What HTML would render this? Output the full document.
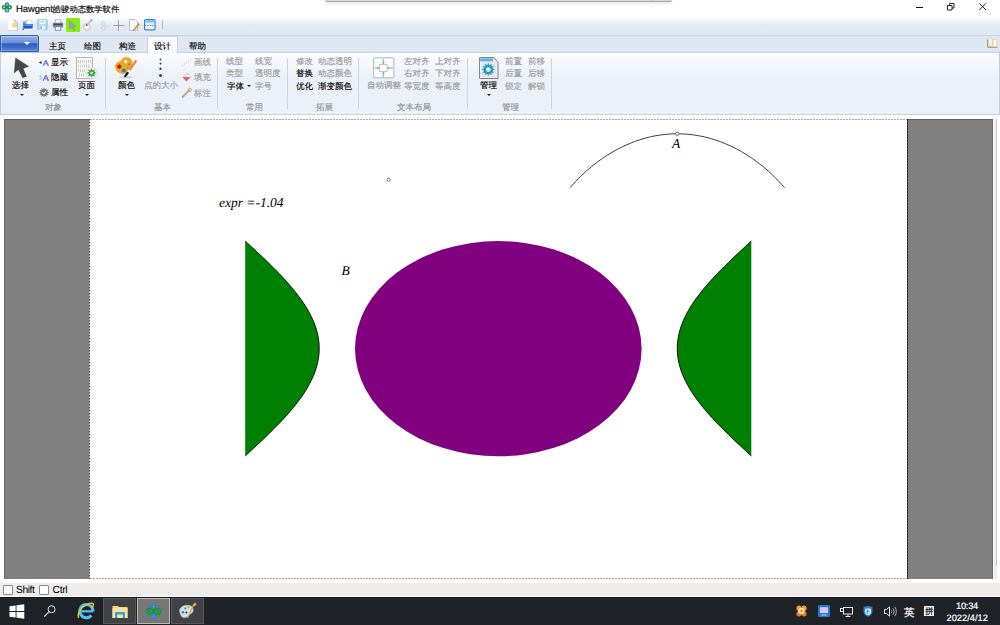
<!DOCTYPE html>
<html><head><meta charset="utf-8">
<style>
*{margin:0;padding:0;box-sizing:border-box}
html,body{text-rendering:geometricPrecision;width:1000px;height:625px;overflow:hidden;background:#fff;font-family:"Liberation Sans",sans-serif;font-size:9px;color:#000;position:relative}
.a{position:absolute;white-space:nowrap}
svg{position:absolute;overflow:visible}
#qat{left:0;top:17px;width:1000px;height:18px;background:linear-gradient(#ffffff 0px,#fdfeff 1px,#eef2f9 5px,#e3eaf4 9px,#e0e8f3 18px)}
#tabs{left:0;top:35px;width:1000px;height:18px;background:#dfe7f2;border-top:1px solid #c6d3e3;border-bottom:1px solid #c3d0e0}
#ribbon{left:0;top:53px;width:1000px;height:62px;background:linear-gradient(#fdfeff 0,#f6f9fd 7px,#ecf1f9 24px,#ebf0f8 100%);border-left:1px solid #c0cfe1;border-right:1px solid #c0cfe1;border-bottom:1px solid #c5d2e3}
#gray{left:4px;top:119px;width:989px;height:460px;background:#808080;border-top:1px solid #606060;border-left:1px solid #6a6a6a;border-right:1px solid #6a6a6a}
#page{left:90px;top:120px;width:817px;height:458px;background:#fff}
#track{left:994px;top:119px;width:3px;height:460px;background:#f0f0f0}
#thumb{left:996px;top:119px;width:1px;height:447px;background:#c8c8c8}
#status{left:0;top:583px;width:1000px;height:13px;background:#efebea;border-bottom:1px solid #fbfbfb;box-sizing:content-box}
#taskbar{left:0;top:597px;width:1000px;height:28px;background:#1f2327;border-top:1px solid #15181b}
.c{font-size:8.5px;line-height:9px;-webkit-text-stroke:0.15px currentColor}
.g{color:#9a9a9a}
.lb{color:#8f8f8f}
.sep{position:absolute;width:1px;top:58px;height:51px;background:#c9d5e4}
.dd{position:absolute;width:0;height:0;border-left:2px solid transparent;border-right:2px solid transparent;border-top:2px solid #222}
.tab{position:absolute;top:42px;font-size:8.5px;line-height:9px;-webkit-text-stroke:0.15px currentColor}
.tile{position:absolute;top:598px;height:26px;background:#404246;border:1px solid #56585c}
</style></head><body>

<!-- title bar -->
<svg style="left:0;top:0" width="16" height="16" viewBox="0 0 16 16">
 <rect x="4.8" y="2.6" width="4.3" height="4" rx="1.5" fill="#2a80d0"/>
 <rect x="4.8" y="8.4" width="4.3" height="4.2" rx="1.5" fill="#2a80d0"/>
 <rect x="5.8" y="3.8" width="2.2" height="8" fill="#7ab8ec"/>
 <ellipse cx="4.4" cy="7.2" rx="2.6" ry="2.3" fill="#14973a"/>
 <ellipse cx="9.4" cy="7.2" rx="2.6" ry="2.3" fill="#14973a"/>
 <circle cx="4.2" cy="7.2" r="0.9" fill="#bfe8c8"/>
 <circle cx="9.6" cy="7.2" r="0.9" fill="#bfe8c8"/>
</svg>
<div class="a" style="left:16px;top:4px;font-size:9.5px;line-height:10px;color:#111;letter-spacing:-0.1px;-webkit-text-stroke:0.2px #111">Hawgent<span style="font-size:8.3px;letter-spacing:0">皓骏动态数学软件</span></div>
<div class="a" style="left:325px;top:0;width:347px;height:2px;background:#d8d8d8;border-bottom:1px solid #a8a8a8;border-radius:0 0 3px 3px;box-shadow:0 2px 3px rgba(0,0,0,0.12)"></div>
<div class="a" style="left:652px;top:0;width:1px;height:2px;background:#b0b0b0"></div>
<div class="a" style="left:916px;top:7px;width:7px;height:1px;background:#111"></div>
<svg style="left:947px;top:3px" width="8" height="8" viewBox="0 0 8 8"><path d="M0.5 2.5h4.5v4.5h-4.5z M2.5 2.5V0.5h4.5v4.5h-2" fill="none" stroke="#111" stroke-width="0.9"/></svg>
<svg style="left:979px;top:3px" width="8" height="8" viewBox="0 0 8 8"><path d="M0.3 0.3L7 7M7 0.3L0.3 7" stroke="#111" stroke-width="0.9"/></svg>

<!-- quick access toolbar -->
<div class="a" id="qat"></div>
<div class="a" id="tabs"></div>
<div class="a" id="ribbon"></div>

<!-- file button -->
<div class="a" style="left:0;top:35px;width:39px;height:17px;background:linear-gradient(#8fb0e2 0,#6a93d6 45%,#2e60bd 52%,#3c6dc5 75%,#5c87d0 100%);border:1px solid #2a5cb4;border-radius:0 2px 0 0;box-shadow:inset 1px 1px 0 rgba(255,255,255,0.35),inset -1px -1px 0 rgba(255,255,255,0.2)"></div>
<div class="dd" style="left:24px;top:42px;border-left-width:3px;border-right-width:3px;border-top:3px solid #fff"></div>

<!-- tabs -->
<div class="tab" style="left:49px">主页</div>
<div class="tab" style="left:84px">绘图</div>
<div class="tab" style="left:119px">构造</div>
<div class="a" style="left:147px;top:36px;width:31px;height:18px;background:#f9fbfe;border:1px solid #c6d3e3;border-bottom:none;border-radius:2px 2px 0 0"></div>
<div class="tab" style="left:154px">设计</div>
<div class="tab" style="left:189px">帮助</div>

<!-- ribbon groups -->
<div class="sep" style="left:105px"></div>
<div class="sep" style="left:217px"></div>
<div class="sep" style="left:287px"></div>
<div class="sep" style="left:358px"></div>
<div class="sep" style="left:467px"></div>
<div class="sep" style="left:551px"></div>

<!-- group 对象 -->
<div class="a c" style="left:12px;top:81px">选择</div>
<div class="dd" style="left:20px;top:94px"></div>
<div class="a c" style="left:51px;top:58px">显示</div>
<div class="a c" style="left:51px;top:73px">隐藏</div>
<div class="a c" style="left:51px;top:88px">属性</div>
<div class="a c" style="left:78px;top:81px">页面</div>
<div class="dd" style="left:85px;top:94px"></div>
<div class="a c lb" style="left:45px;top:103px">对象</div>

<!-- group 基本 -->
<div class="a c" style="left:118px;top:81px">颜色</div>
<div class="dd" style="left:125px;top:94px"></div>
<div class="a c g" style="left:144px;top:81px">点的大小</div>
<div class="a c g" style="left:194px;top:58px">画线</div>
<div class="a c g" style="left:194px;top:73px">填充</div>
<div class="a c g" style="left:194px;top:88.5px">标注</div>
<div class="a c lb" style="left:154px;top:103px">基本</div>

<!-- group 常用 -->
<div class="a c g" style="left:226px;top:57px">线型</div>
<div class="a c g" style="left:255px;top:57px">线宽</div>
<div class="a c g" style="left:226px;top:69px">类型</div>
<div class="a c g" style="left:255px;top:69px">透明度</div>
<div class="a c" style="left:227px;top:81.5px">字体</div>
<div class="dd" style="left:247px;top:85px"></div>
<div class="a c g" style="left:255px;top:81.5px">字号</div>
<div class="a c lb" style="left:246px;top:103px">常用</div>

<!-- group 拓展 -->
<div class="a c g" style="left:296px;top:57px">修改</div>
<div class="a c g" style="left:318px;top:57px">动态透明</div>
<div class="a c" style="left:296px;top:69px">替换</div>
<div class="a c g" style="left:318px;top:69px">动态颜色</div>
<div class="a c" style="left:296px;top:81.5px">优化</div>
<div class="a c" style="left:318px;top:81.5px">渐变颜色</div>
<div class="a c lb" style="left:316px;top:103px">拓展</div>

<!-- group 文本布局 -->
<div class="a c g" style="left:367px;top:81px">自动调整</div>
<div class="a c g" style="left:404px;top:57px">左对齐</div>
<div class="a c g" style="left:435px;top:57px">上对齐</div>
<div class="a c g" style="left:404px;top:69px">右对齐</div>
<div class="a c g" style="left:435px;top:69px">下对齐</div>
<div class="a c g" style="left:404px;top:81.5px">等宽度</div>
<div class="a c g" style="left:435px;top:81.5px">等高度</div>
<div class="a c lb" style="left:397px;top:103px">文本布局</div>

<!-- group 管理 -->
<div class="a c" style="left:480px;top:81px">管理</div>
<div class="dd" style="left:487px;top:94px"></div>
<div class="a c g" style="left:505px;top:57px">前置</div>
<div class="a c g" style="left:528px;top:57px">前移</div>
<div class="a c g" style="left:505px;top:69px">后置</div>
<div class="a c g" style="left:528px;top:69px">后移</div>
<div class="a c g" style="left:505px;top:81.5px">锁定</div>
<div class="a c g" style="left:528px;top:81.5px">解锁</div>
<div class="a c lb" style="left:502px;top:103px">管理</div>

<!-- work area -->
<div class="a" id="gray"></div>
<div class="a" id="page"></div>
<div class="a" style="left:90px;top:119px;width:817px;height:1px;background:repeating-linear-gradient(90deg,#a8a8a8 0 2px,#fff 2px 3px)"></div>
<div class="a" style="left:90px;top:578px;width:817px;height:1px;background:repeating-linear-gradient(90deg,#a8a8a8 0 2px,#fff 2px 3px)"></div>
<div class="a" style="left:89px;top:119px;width:1px;height:460px;background:repeating-linear-gradient(180deg,#474747 0 1px,#8a8a8a 1px 2px,#c4c4c4 2px 3px)"></div>
<div class="a" style="left:907px;top:119px;width:1px;height:460px;background:repeating-linear-gradient(180deg,#1a1a1a 0 2px,#555 2px 3px)"></div>
<div class="a" id="track"></div>
<div class="a" id="thumb"></div>
<!-- canvas -->
<svg style="left:0;top:0" width="1000" height="625" viewBox="0 0 1000 625">
<path d="M245.2 241.0 L251.0 246.4 L256.8 251.8 L262.5 257.1 L268.1 262.5 L273.5 267.9 L278.8 273.2 L283.9 278.6 L288.7 284.0 L293.3 289.4 L297.5 294.8 L301.5 300.1 L305.1 305.5 L308.3 310.9 L311.1 316.2 L313.6 321.6 L315.6 327.0 L317.2 332.4 L318.3 337.8 L319.0 343.1 L319.2 348.5 L319.0 353.9 L318.3 359.2 L317.2 364.6 L315.6 370.0 L313.6 375.4 L311.1 380.8 L308.3 386.1 L305.1 391.5 L301.5 396.9 L297.5 402.2 L293.3 407.6 L288.7 413.0 L283.9 418.4 L278.8 423.8 L273.5 429.1 L268.1 434.5 L262.5 439.9 L256.8 445.2 L251.0 450.6 L245.2 456.0Z" fill="#008000"/>
<path d="M245.2 241.0 L251.0 246.4 L256.8 251.8 L262.5 257.1 L268.1 262.5 L273.5 267.9 L278.8 273.2 L283.9 278.6 L288.7 284.0 L293.3 289.4 L297.5 294.8 L301.5 300.1 L305.1 305.5 L308.3 310.9 L311.1 316.2 L313.6 321.6 L315.6 327.0 L317.2 332.4 L318.3 337.8 L319.0 343.1 L319.2 348.5 L319.0 353.9 L318.3 359.2 L317.2 364.6 L315.6 370.0 L313.6 375.4 L311.1 380.8 L308.3 386.1 L305.1 391.5 L301.5 396.9 L297.5 402.2 L293.3 407.6 L288.7 413.0 L283.9 418.4 L278.8 423.8 L273.5 429.1 L268.1 434.5 L262.5 439.9 L256.8 445.2 L251.0 450.6 L245.2 456.0" fill="none" stroke="#0a1a0a" stroke-width="1"/>
<path d="M751.3 241.0 L745.5 246.4 L739.7 251.8 L734.0 257.1 L728.4 262.5 L723.0 267.9 L717.7 273.2 L712.6 278.6 L707.8 284.0 L703.2 289.4 L699.0 294.8 L695.0 300.1 L691.4 305.5 L688.2 310.9 L685.4 316.2 L682.9 321.6 L680.9 327.0 L679.3 332.4 L678.2 337.8 L677.5 343.1 L677.3 348.5 L677.5 353.9 L678.2 359.2 L679.3 364.6 L680.9 370.0 L682.9 375.4 L685.4 380.8 L688.2 386.1 L691.4 391.5 L695.0 396.9 L699.0 402.2 L703.2 407.6 L707.8 413.0 L712.6 418.4 L717.7 423.8 L723.0 429.1 L728.4 434.5 L734.0 439.9 L739.7 445.2 L745.5 450.6 L751.3 456.0Z" fill="#008000"/>
<path d="M751.3 241.0 L745.5 246.4 L739.7 251.8 L734.0 257.1 L728.4 262.5 L723.0 267.9 L717.7 273.2 L712.6 278.6 L707.8 284.0 L703.2 289.4 L699.0 294.8 L695.0 300.1 L691.4 305.5 L688.2 310.9 L685.4 316.2 L682.9 321.6 L680.9 327.0 L679.3 332.4 L678.2 337.8 L677.5 343.1 L677.3 348.5 L677.5 353.9 L678.2 359.2 L679.3 364.6 L680.9 370.0 L682.9 375.4 L685.4 380.8 L688.2 386.1 L691.4 391.5 L695.0 396.9 L699.0 402.2 L703.2 407.6 L707.8 413.0 L712.6 418.4 L717.7 423.8 L723.0 429.1 L728.4 434.5 L734.0 439.9 L739.7 445.2 L745.5 450.6 L751.3 456.0" fill="none" stroke="#0a1a0a" stroke-width="1"/>
<ellipse cx="498.3" cy="348.7" rx="143.3" ry="107.6" fill="#800080"/>
<path d="M570.1 187.6 L575.5 181.6 L580.8 176.2 L586.2 171.2 L591.5 166.6 L596.9 162.4 L602.3 158.5 L607.6 155.0 L613.0 151.7 L618.3 148.8 L623.7 146.1 L629.1 143.8 L634.4 141.6 L639.8 139.8 L645.1 138.2 L650.5 136.8 L655.9 135.7 L661.2 134.9 L666.6 134.3 L671.9 133.9 L677.3 133.8 L682.7 133.9 L688.0 134.3 L693.4 134.9 L698.7 135.7 L704.1 136.8 L709.5 138.2 L714.8 139.8 L720.2 141.6 L725.5 143.8 L730.9 146.1 L736.3 148.8 L741.6 151.7 L747.0 155.0 L752.3 158.5 L757.7 162.4 L763.1 166.6 L768.4 171.2 L773.8 176.2 L779.1 181.6 L784.5 187.6" fill="none" stroke="#404040" stroke-width="1"/>
<circle cx="677.3" cy="133.8" r="1.7" fill="#fff" stroke="#555" stroke-width="0.8"/>
<circle cx="388.5" cy="179.7" r="1.6" fill="#fff" stroke="#666" stroke-width="0.9"/>
</svg>
<div class="a" style="left:219px;top:196px;font-family:'Liberation Serif',serif;font-style:italic;font-size:13.5px;line-height:14px">expr =-1.04</div>
<div class="a" style="left:341.5px;top:263.8px;font-family:'Liberation Serif',serif;font-style:italic;font-size:13.5px;line-height:14px">B</div>
<div class="a" style="left:672px;top:137px;font-family:'Liberation Serif',serif;font-style:italic;font-size:13.5px;line-height:14px">A</div>

<!-- status bar -->
<div class="a" id="status"></div>
<div class="a" style="left:3px;top:585px;width:10px;height:10px;border:1px solid #8a8a8a;border-radius:1px;background:#fff"></div>
<div class="a" style="left:16px;top:585.5px;font-size:10.3px;line-height:10px;letter-spacing:-0.45px">Shift</div>
<div class="a" style="left:39px;top:585px;width:10px;height:10px;border:1px solid #8a8a8a;border-radius:1px;background:#fff"></div>
<div class="a" style="left:52.5px;top:585.5px;font-size:10.3px;line-height:10px;letter-spacing:-0.3px">Ctrl</div>

<!-- taskbar -->
<div class="a" id="taskbar"></div>
<div class="tile" style="left:103px;width:33px"></div>
<div class="tile" style="left:137px;width:33px;background:#777;border-color:#b8b8b8"></div>
<div class="tile" style="left:171px;width:33px"></div>
<div class="a" style="left:956px;top:600.5px;font-size:9.3px;line-height:10px;color:#fff;letter-spacing:-0.25px;-webkit-text-stroke:0.2px #fff">10:34</div>
<div class="a" style="left:946.5px;top:613px;font-size:9.3px;line-height:10px;color:#fff;-webkit-text-stroke:0.2px #fff">2022/4/12</div>
<div class="a" style="left:904px;top:607.5px;font-size:10.5px;line-height:10px;color:#fff;-webkit-text-stroke:0.2px #fff">英</div>


<!-- QAT icons -->
<svg style="left:8px;top:19px" width="10" height="12" viewBox="0 0 10 12">
 <path d="M0.3 0.3H6.2L9.4 3.5V11.6H0.3Z" fill="#fdfdff"/>
 <path d="M6 0.3L9.4 3.7V11.6" fill="none" stroke="#9aa6c8" stroke-width="0.7"/>
 <path d="M5.5 0.5L9 4" stroke="#c8c8f0" stroke-width="1.5"/>
 <path d="M0.3 11.6H9.4" stroke="#c8c8c8" stroke-width="0.8"/>
 <circle cx="6.6" cy="6.3" r="2" fill="#f8d040"/>
 <path d="M6.6 3.2V9.4M3.5 6.3H9.7M4.4 4.1L8.8 8.5M8.8 4.1L4.4 8.5" stroke="#f0a040" stroke-width="0.6" opacity="0.8"/>
 <circle cx="6.6" cy="6.3" r="1.6" fill="#fbe060"/>
</svg>
<svg style="left:22px;top:19px" width="12" height="12" viewBox="0 0 12 12">
 <path d="M1 2.5H3.5L4.3 1.5H6V8H1Z" fill="#5a9ae0"/>
 <path d="M3.5 3L7 0.8L10 2.5L9.5 5.5L5 6Z" fill="#fff" stroke="#a8b8d8" stroke-width="0.5"/>
 <path d="M0.6 10.8L2 5.2H11.3L10 10.8Z" fill="#1a5cd0"/>
 <path d="M2.2 6.2H10.8" stroke="#7fb0f0" stroke-width="0.9"/>
 <path d="M0.8 9.6H10.2V11H0.8Z" fill="#eef2f8"/>
 <circle cx="1.2" cy="10.2" r="0.8" fill="#1a5cd0"/>
</svg>
<svg style="left:37px;top:19px" width="11" height="11" viewBox="0 0 11 11">
 <rect x="0.5" y="0.5" width="9.8" height="10" rx="1" fill="#a9d6f5" stroke="#8cc8f0" stroke-width="0.8"/>
 <rect x="2.5" y="1" width="6" height="4.2" fill="#fff"/>
 <path d="M3.2 2.8H7.8" stroke="#8a8f95" stroke-width="0.6"/>
 <rect x="2.8" y="6.8" width="5.2" height="3.7" fill="#f4f8fc"/>
 <rect x="3.6" y="7.3" width="1" height="2.6" fill="#6a7a88"/>
</svg>
<svg style="left:52px;top:19px" width="12" height="12" viewBox="0 0 12 12">
 <rect x="3.2" y="0.8" width="5.6" height="3.5" fill="#fff" stroke="#6aa8dc" stroke-width="0.7"/>
 <rect x="0.8" y="3.8" width="10.4" height="4.8" rx="1" fill="#8a8a8a"/>
 <rect x="1.5" y="4.6" width="9" height="1.6" fill="#4a4a4a"/>
 <rect x="3.2" y="7.8" width="5.6" height="3.4" fill="#fff" stroke="#3a86c8" stroke-width="0.8"/>
</svg>
<div class="a" style="left:66px;top:18px;width:14px;height:14px;background:#84ee12;border-radius:1px"></div>
<svg style="left:69px;top:20px" width="8" height="11" viewBox="0 0 8 11">
 <path d="M0.5 0.5L7 6.5H4.2L5.8 10L4.6 10.5L3 7L0.5 9Z" fill="#a49bb6" stroke="#8d85a3" stroke-width="0.5"/>
</svg>
<svg style="left:83px;top:19px" width="10" height="12" viewBox="0 0 10 12">
 <circle cx="3.9" cy="8" r="3.2" fill="#fff" stroke="#f2a0a0" stroke-width="1"/>
 <path d="M9 0.8L3.6 6.2" stroke="#8cc4ea" stroke-width="1.5"/>
 <path d="M9.2 0.6L8.2 1.6" stroke="#d85050" stroke-width="1.3"/>
 <path d="M4.2 5.6L3.2 6.6" stroke="#333" stroke-width="1.3"/>
</svg>
<svg style="left:100px;top:21px" width="9" height="10" viewBox="0 0 9 10">
 <circle cx="3.5" cy="2.5" r="1.8" fill="none" stroke="#d0d0d0" stroke-width="1"/>
 <circle cx="3.5" cy="7.3" r="2" fill="none" stroke="#d0d0d0" stroke-width="1"/>
 <path d="M6 4L8.5 5L6 6" fill="none" stroke="#d8d8d8" stroke-width="1"/>
</svg>
<svg style="left:113px;top:20px" width="12" height="11" viewBox="0 0 12 11">
 <path d="M5.5 0V11M0.5 5.5H11.5" stroke="#8c8c8c" stroke-width="0.8"/>
</svg>
<svg style="left:129px;top:19px" width="11" height="12" viewBox="0 0 11 12">
 <path d="M0.5 0.5H6L8.5 3V11.5H0.5Z" fill="#fafafa" stroke="#b0b0b0" stroke-width="0.8"/>
 <path d="M10.3 5.5L5.5 11L4.3 11.6L4.6 10.3L9.3 4.7Z" fill="#f2b721" stroke="#8a6a20" stroke-width="0.5"/>
 <path d="M10.3 5.5L9.3 4.7" stroke="#e05050" stroke-width="1"/>
</svg>
<svg style="left:144px;top:19px" width="12" height="12" viewBox="0 0 12 12">
 <rect x="0.6" y="0.6" width="10.4" height="10.2" rx="1" fill="#fff" stroke="#2f86cc" stroke-width="1.2"/>
 <rect x="1.2" y="1.2" width="9.2" height="2.4" fill="#7cc0ee"/>
 <path d="M2 4.3H10M2 8.4H10" stroke="#d8d8d8" stroke-width="0.8"/>
 <path d="M0.8 6.4H10.8" stroke="#3a93dc" stroke-width="1" stroke-dasharray="1.6 0.9"/>
</svg>
<div class="a" style="left:162px;top:20px;width:1px;height:9px;background:#b8b8b8"></div>

<!-- book icon -->
<svg style="left:987px;top:37px" width="11" height="11" viewBox="0 0 11 11">
 <rect x="0.3" y="2.5" width="1" height="7.5" fill="#4a86c8"/>
 <path d="M1 10V2L3 0.5L5.5 2V10Z" fill="#f2d9a6"/>
 <path d="M2.5 1.5L4.5 2.5V8.5L2.5 7.5Z" fill="#fff"/>
 <path d="M5.5 2.3H10V10H5.5Z" fill="#efd49c"/>
 <path d="M6.8 3H9V9.5H6.8Z" fill="#fff"/>
 <path d="M0.5 10.3H10.3" stroke="#6b7f99" stroke-width="0.8"/>
</svg>

<!-- ribbon icons: select arrow -->
<svg style="left:12px;top:56px" width="19" height="24" viewBox="12 56 19 24">
 <path d="M15.2 57.1L29.6 66.4L23.8 68.8L27.2 76.8L22.4 78.4L18.3 70.3L13.5 73.9Z" fill="#474747" stroke="#fff" stroke-width="0.6" stroke-linejoin="round"/>
</svg>
<!-- show/hide A icons -->
<svg style="left:38px;top:58px" width="13" height="9" viewBox="0 0 13 9">
 <path d="M1 4.5H3.5M3 3V6" stroke="#333" stroke-width="0.9"/>
 <path d="M5.2 7.8L7.8 2.3L10.4 7.8" fill="none" stroke="#2b8de8" stroke-width="1.2" stroke-linejoin="bevel"/>
 <path d="M7.8 2.3L10.4 7.8" fill="none" stroke="#e25aa8" stroke-width="1.2"/>
 <path d="M6.4 5.8H9.2" stroke="#5a7de0" stroke-width="0.9"/>
</svg>
<svg style="left:38px;top:73px" width="13" height="9" viewBox="0 0 13 9">
 <path d="M1 3H3.5M1 6H3.5M3 2.5V6.5" stroke="#bbb" stroke-width="0.9"/>
 <path d="M5.2 7.8L7.8 2.3L10.4 7.8" fill="none" stroke="#2b8de8" stroke-width="1.2" stroke-linejoin="bevel"/>
 <path d="M7.8 2.3L10.4 7.8" fill="none" stroke="#e25aa8" stroke-width="1.2"/>
 <path d="M6.4 5.8H9.2" stroke="#5a7de0" stroke-width="0.9"/>
</svg>
<svg style="left:38px;top:87px" width="12" height="11" viewBox="0 0 12 11">
 <path d="M9.37 5.06 L10.79 5.12 L10.79 5.88 L9.37 5.94 L9.14 6.80 L10.33 7.57 L9.96 8.22 L8.70 7.57 L8.07 8.20 L8.72 9.46 L8.07 9.83 L7.30 8.64 L6.44 8.87 L6.38 10.29 L5.62 10.29 L5.56 8.87 L4.70 8.64 L3.93 9.83 L3.28 9.46 L3.93 8.20 L3.30 7.57 L2.04 8.22 L1.67 7.57 L2.86 6.80 L2.63 5.94 L1.21 5.88 L1.21 5.12 L2.63 5.06 L2.86 4.20 L1.67 3.43 L2.04 2.78 L3.30 3.43 L3.93 2.80 L3.28 1.54 L3.93 1.17 L4.70 2.36 L5.56 2.13 L5.62 0.71 L6.38 0.71 L6.44 2.13 L7.30 2.36 L8.07 1.17 L8.72 1.54 L8.07 2.80 L8.70 3.43 L9.96 2.78 L10.33 3.43 L9.14 4.20Z" fill="#707070"/>
 <circle cx="6" cy="5.5" r="3.5" fill="#7a7a7a"/>
 <path d="M4.3 5.3L5.8 6.8L7.9 4.3" fill="none" stroke="#fff" stroke-width="1.1"/>
</svg>
<!-- page icon -->
<svg style="left:76px;top:57px" width="23" height="23" viewBox="76 57 23 23">
 <rect x="76.5" y="57.5" width="16" height="21" fill="#f8f8f8" stroke="#b4b4b4" stroke-width="1"/>
 <g stroke="#c6c6c6" stroke-width="0.9">
  <path d="M78.5 60V63M80.5 60V63M82.5 60V63M84.5 60V63M86.5 60V63M88.5 60V63M90.5 60V63"/>
  <path d="M78.5 64.5V67.5M80.5 64.5V67.5M82.5 64.5V67.5M84.5 64.5V67.5M86.5 64.5V67.5M88.5 64.5V67.5"/>
  <path d="M78.5 69V72M80.5 69V72M82.5 69V72M84.5 69V72"/>
  <path d="M79.5 73.5V76.5M81.5 73.5V76.5M83.5 73.5V76.5"/>
 </g>
 <circle cx="91.6" cy="73" r="5.8" fill="#f4f0f6" stroke="#ccc" stroke-width="0.6"/>
 <path d="M94.52 72.30 L95.86 72.43 L95.86 73.57 L94.52 73.70 L94.16 74.57 L95.02 75.61 L94.21 76.42 L93.17 75.56 L92.30 75.92 L92.17 77.26 L91.03 77.26 L90.90 75.92 L90.03 75.56 L88.99 76.42 L88.18 75.61 L89.04 74.57 L88.68 73.70 L87.34 73.57 L87.34 72.43 L88.68 72.30 L89.04 71.43 L88.18 70.39 L88.99 69.58 L90.03 70.44 L90.90 70.08 L91.03 68.74 L92.17 68.74 L92.30 70.08 L93.17 70.44 L94.21 69.58 L95.02 70.39 L94.16 71.43Z" fill="#3aa635"/>
 <circle cx="91.6" cy="73" r="1.3" fill="#eef6ea"/>
</svg>
<!-- palette icon -->
<svg style="left:113px;top:55px" width="26" height="25" viewBox="113 55 26 25">
 <ellipse cx="126" cy="77.3" rx="7.5" ry="1.3" fill="#000" opacity="0.12"/>
 <path d="M123 58.2C127 56.5 131.5 58 132 62C132.5 65 130.5 66.5 130 69C129.5 72 127 74 122.5 73.5C118 73 115.5 70 115.5 66.5C115.5 63 118 62 120.5 61.5C122 61 121.5 59 123 58.2Z" fill="#f5a71b" stroke="#e8900a" stroke-width="0.5"/>
 <circle cx="125.6" cy="61.6" r="1.7" fill="#fff"/>
 <circle cx="119.3" cy="66.7" r="2.1" fill="#b61d1d"/>
 <circle cx="123.8" cy="70.4" r="2" fill="#1b86d8"/>
 <circle cx="129.2" cy="64.2" r="1" fill="#8a5ac8"/>
 <circle cx="127.6" cy="67.6" r="1" fill="#62b83a"/>
 <path d="M135.8 61.2L129.2 70.5" stroke="#e6883a" stroke-width="2.3" stroke-linecap="round"/>
 <path d="M129.6 70L127.4 73.2" stroke="#f4f4f4" stroke-width="2.2"/>
 <path d="M127.6 73L125.2 76.2" stroke="#161616" stroke-width="2.2" stroke-linecap="round"/>
</svg>
<!-- dots -->
<svg style="left:155px;top:56px" width="12" height="22" viewBox="155 56 12 22">
 <circle cx="160.5" cy="59.5" r="0.9" fill="#4a4a4a"/>
 <circle cx="160.5" cy="63.6" r="1.05" fill="#4a4a4a"/>
 <circle cx="160.5" cy="68.7" r="1.25" fill="#4a4a4a"/>
 <circle cx="160.5" cy="75.5" r="1.55" fill="#4a4a4a"/>
</svg>
<!-- draw line / fill / label -->
<svg style="left:181px;top:57px" width="12" height="42" viewBox="181 57 12 42">
 <path d="M182 65.7L191 59.5" stroke="#9a9a9a" stroke-width="0.9" stroke-dasharray="0.9 1.6"/>
 <path d="M182.5 77H190.5L186.5 81.5Z" fill="#f05a6a"/>
 <path d="M183 76.5L188 73M188 73V75M190 76L191 77" stroke="#b0b0b0" stroke-width="0.6" fill="none"/>
 <path d="M182.5 97L189 90.5" stroke="#9a9a9a" stroke-width="1.8" stroke-linecap="round"/>
 <path d="M183 96.5L189 90.5" stroke="#e0e0e0" stroke-width="0.6"/>
 <circle cx="189.8" cy="89.8" r="1.6" fill="none" stroke="#f0a030" stroke-width="1"/>
</svg>
<!-- auto adjust icon -->
<svg style="left:373px;top:57px" width="22" height="22" viewBox="373 57 22 22">
 <rect x="373.6" y="57.8" width="20.2" height="20" rx="1" fill="#fbfcfe" stroke="#b5b5b5" stroke-width="1"/>
 <rect x="379.6" y="64.4" width="7.4" height="7.2" fill="#fff" stroke="#f5b48a" stroke-width="1"/>
 <g stroke="#5ab4ea" stroke-width="1">
  <path d="M383.3 59V64M383.3 72V77M374.5 68H379.5M387.2 68H393"/>
 </g>
 <g fill="#5ab4ea">
  <path d="M381.8 62.2H384.8L383.3 64Z M381.8 73.8H384.8L383.3 72Z M377.6 66.5V69.5L379.5 68Z M389 66.5V69.5L387.2 68Z"/>
 </g>
</svg>
<!-- manage icon -->
<svg style="left:479px;top:57px" width="20" height="23" viewBox="479 57 20 23">
 <path d="M479.6 57.6H493.5L498 62.2V78.5H479.6Z" fill="#fff" stroke="#7a7a7a" stroke-width="1"/>
 <rect x="480.2" y="58.3" width="13" height="3.2" fill="#5cb5e6"/>
 <rect x="481.2" y="62.2" width="15.5" height="15.5" fill="#e6e6e6"/>
 <path d="M492.86 68.90 L494.48 69.01 L494.48 69.99 L492.86 70.10 L492.55 71.26 L493.90 72.17 L493.41 73.01 L491.95 72.30 L491.10 73.15 L491.81 74.61 L490.97 75.10 L490.06 73.75 L488.90 74.06 L488.79 75.68 L487.81 75.68 L487.70 74.06 L486.54 73.75 L485.63 75.10 L484.79 74.61 L485.50 73.15 L484.65 72.30 L483.19 73.01 L482.70 72.17 L484.05 71.26 L483.74 70.10 L482.12 69.99 L482.12 69.01 L483.74 68.90 L484.05 67.74 L482.70 66.83 L483.19 65.99 L484.65 66.70 L485.50 65.85 L484.79 64.39 L485.63 63.90 L486.54 65.25 L487.70 64.94 L487.81 63.32 L488.79 63.32 L488.90 64.94 L490.06 65.25 L490.97 63.90 L491.81 64.39 L491.10 65.85 L491.95 66.70 L493.41 65.99 L493.90 66.83 L492.55 67.74Z" fill="#1b95dc"/>
 <circle cx="488.3" cy="69.5" r="4.7" fill="#1b95dc"/>
 <circle cx="488.3" cy="69.5" r="3.3" fill="none" stroke="#16a89a" stroke-width="1.2"/>
 <circle cx="488.3" cy="69.5" r="2.3" fill="#fff"/>
</svg>

<!-- taskbar icons -->
<svg style="left:9px;top:604px" width="16" height="15" viewBox="0 0 16 15">
 <path d="M0.5 2.2L6.6 1.4V7H0.5Z M7.5 1.3L15.3 0.2V7H7.5Z M0.5 7.9H6.6V13.6L0.5 12.8Z M7.5 7.9H15.3V14.8L7.5 13.7Z" fill="#fff"/>
</svg>
<svg style="left:43px;top:603px" width="15" height="15" viewBox="0 0 15 15">
 <circle cx="8.6" cy="6.2" r="3.5" fill="none" stroke="#e6e6e6" stroke-width="1"/>
 <path d="M6.2 8.7L1.3 13.5" stroke="#e6e6e6" stroke-width="1.1"/>
</svg>
<svg style="left:72px;top:599px" width="26" height="23" viewBox="72 599 26 23">
 <path d="M93 611.2A6.6 6.6 0 1 0 91.4 615.4" fill="none" stroke="#4cc4f4" stroke-width="3"/>
 <path d="M80.5 611.3H93.2" stroke="#4cc4f4" stroke-width="2.2"/>
 <path d="M78.8 617.8C76.8 614 80.5 607.5 86.5 604.6C90.3 602.8 93.6 602.6 93.4 604.9C93.3 606 92.6 607 91.8 607.6" fill="none" stroke="#f2c01a" stroke-width="1.5"/>
</svg>
<svg style="left:112px;top:605px" width="16" height="14" viewBox="0 0 16 14">
 <path d="M0.5 1H6L7 2H15.5V13H0.5Z" fill="#f8d775"/>
 <path d="M0.5 3H15.5V13H0.5Z" fill="#fde49a"/>
 <path d="M3 13V7H13V13H10.8V9.5H5.2V13Z" fill="#2ba4e9"/>
</svg>
<svg style="left:146px;top:603px" width="16" height="17" viewBox="0 0 16 17">
 <circle cx="7.5" cy="3.6" r="2.6" fill="#1c8ad8"/>
 <circle cx="7.5" cy="13" r="2.6" fill="#1c8ad8"/>
 <circle cx="7.5" cy="3.6" r="0.8" fill="#6ab8f0"/>
 <circle cx="7.5" cy="13" r="0.8" fill="#6ab8f0"/>
 <path d="M7.5 8.3C6 5.9 4.4 5.5 3 5.5C1.5 5.5 0.6 6.9 0.6 8.3C0.6 9.7 1.5 11.1 3 11.1C4.4 11.1 6 10.7 7.5 8.3C9 5.9 10.6 5.5 12 5.5C13.5 5.5 14.4 6.9 14.4 8.3C14.4 9.7 13.5 11.1 12 11.1C10.6 11.1 9 10.7 7.5 8.3Z" fill="none" stroke="#14993a" stroke-width="1.9"/>
 <circle cx="3.2" cy="8.3" r="0.7" fill="#0d6a28"/>
 <circle cx="11.8" cy="8.3" r="0.7" fill="#0d6a28"/>
</svg>
<svg style="left:178px;top:602px" width="19" height="18" viewBox="0 0 19 18">
 <path d="M1.8 10C0.8 6.5 4.2 3.6 8.5 3.3C12.5 3 15.3 5 15.2 8C15.1 11 12.8 11.6 11.3 12.8C9.8 14 8.8 16.2 5.5 15.6C3.5 15.2 2.4 12.8 1.8 10Z" fill="#c9e4f7" stroke="#9cc6e6" stroke-width="0.6"/>
 <circle cx="5" cy="10.2" r="1.2" fill="#e03a2a"/>
 <circle cx="7.3" cy="6.4" r="1.2" fill="#4cbb3a"/>
 <circle cx="10.6" cy="5.2" r="1.3" fill="#f2b81a"/>
 <circle cx="8.3" cy="10.4" r="1" fill="#2a3a48"/>
 <path d="M15.6 3L9.5 16" stroke="#f09a2a" stroke-width="1.4"/>
 <path d="M17.8 1.2L15.6 3.6" stroke="#e0a860" stroke-width="2.4"/>
</svg>

<!-- tray -->
<svg style="left:796px;top:605px" width="11" height="12" viewBox="0 0 11 12">
 <circle cx="3" cy="3.2" r="2.6" fill="#f89a2a"/>
 <circle cx="8" cy="3.2" r="2.6" fill="#f89a2a"/>
 <circle cx="3" cy="8.8" r="2.6" fill="#f07a1a"/>
 <circle cx="8" cy="8.8" r="2.6" fill="#f07a1a"/>
 <circle cx="5.5" cy="6" r="3.2" fill="#f8a030"/>
 <circle cx="5.5" cy="6" r="2.4" fill="none" stroke="#fff2d8" stroke-width="1.2"/>
</svg>
<svg style="left:818px;top:605px" width="12" height="12" viewBox="0 0 12 12">
 <rect x="0" y="0" width="12" height="12" rx="1.5" fill="#1f7fd6"/>
 <rect x="2" y="2.2" width="8" height="5.8" fill="#d9c9e6"/>
 <path d="M3.5 10H8.5" stroke="#d9c9e6" stroke-width="1"/>
</svg>
<svg style="left:840px;top:607px" width="13" height="10" viewBox="0 0 13 10">
 <rect x="3.5" y="0.5" width="9" height="6.5" fill="none" stroke="#e8e8e8" stroke-width="1"/>
 <rect x="0.5" y="1.5" width="3" height="3" fill="#1f2327" stroke="#e8e8e8" stroke-width="1"/>
 <path d="M8 7V9M5.5 9.5H10.5" stroke="#e8e8e8" stroke-width="1"/>
</svg>
<svg style="left:863px;top:606px" width="10" height="11" viewBox="0 0 10 11">
 <path d="M0.5 1L5 0L9.5 1V5.5C9.5 8 7.5 9.8 5 10.8C2.5 9.8 0.5 8 0.5 5.5Z" fill="#2f7fd6"/>
 <path d="M2 3L5 2.2L8 3V5.8C8 7.5 6.8 8.6 5 9.3C3.2 8.6 2 7.5 2 5.8Z" fill="#dbe9f7"/>
 <path d="M4.3 3.5V8M4.3 5.2H6.5" stroke="#2f7fd6" stroke-width="1"/>
</svg>
<svg style="left:884px;top:606px" width="13" height="11" viewBox="0 0 13 11">
 <path d="M0.5 3.5H2.5L5.5 0.8V10.2L2.5 7.5H0.5Z" fill="none" stroke="#e6e6e6" stroke-width="1"/>
 <path d="M7.2 3.8C7.9 4.8 7.9 6.2 7.2 7.2M9 2.3C10.3 4 10.3 7 9 8.7M10.8 0.8C12.8 3.5 12.8 7.5 10.8 10.2" fill="none" stroke="#bdbdbd" stroke-width="0.9"/>
</svg>
<div class="a" style="left:924px;top:606px;width:10px;height:10px;background:#fff"></div><div class="a" style="left:925px;top:606.8px;font-size:8.5px;line-height:9px;color:#000;-webkit-text-stroke:0.2px #000">拼</div>

</body></html>
